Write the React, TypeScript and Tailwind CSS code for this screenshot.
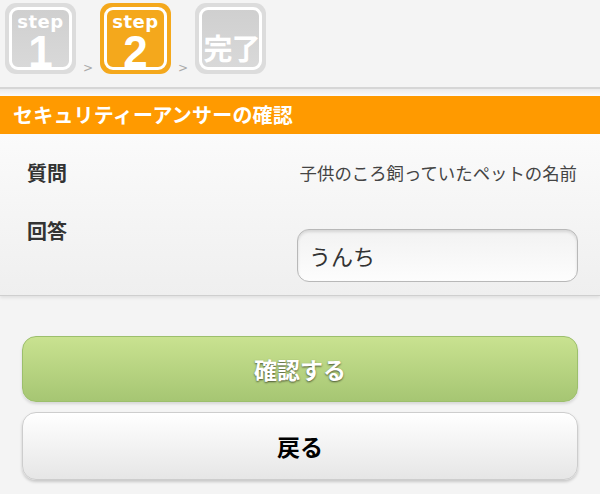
const jp = { fontFamily: '"Noto Sans CJK JP", "Noto Sans", sans-serif' };

// step badge drawn as a small graphic, like the original image
const StepBadge = ({ id, active, label, num }: { id: string; active?: boolean; label?: string; num: string }) => {
  const outer = active ? '#f4a81c' : '#dcdcdc';
  return (
    <svg width="71" height="71" viewBox="0 0 71 71" overflow="visible" className="block shrink-0 overflow-visible">
      <defs>
        <linearGradient id={`g-${id}`} x1="0" y1="0" x2="0" y2="1">
          <stop offset="0" stopColor={active ? '#f4a81c' : '#cfcfcf'} />
          <stop offset="1" stopColor={active ? '#f4a81c' : '#d9d9d9'} />
        </linearGradient>
      </defs>
      <rect x="0" y="0" width="71" height="71" rx="11" fill={outer} />
      <rect x="5.5" y="5.5" width="60" height="60" rx="7.5" fill={`url(#g-${id})`} stroke="#fff" strokeWidth="3" />
      {label ? (
        <>
          <text
            x="35.5"
            y="25"
            textAnchor="middle"
            fill="#fff"
            fontSize="18"
            fontWeight="bold"
            fontFamily='"DejaVu Sans", sans-serif'
            letterSpacing="0.5"
          >
            {label}
          </text>
          <text
            x="35.5"
            y="64"
            textAnchor="middle"
            fill="#fff"
            fontSize="44"
            fontWeight="bold"
            fontFamily='"Liberation Sans", Arial, sans-serif'
          >
            {num}
          </text>
        </>
      ) : (
        <text
          x="36.5"
          y="57"
          textAnchor="middle"
          fill="#fff"
          fontSize="29"
          fontWeight="bold"
          fontFamily='"Noto Sans CJK JP", sans-serif'
          letterSpacing="-1"
        >
          {num}
        </text>
      )}
    </svg>
  );
};

const Arrow = () => (
  <span
    className="self-end w-[24px] text-center text-[12px] leading-none text-[#aaaaaa]"
    style={{ fontFamily: '"DejaVu Sans", sans-serif' }}
  >
    &gt;
  </span>
);

export default function App() {
  return (
    <div className="w-[600px] h-[494px] overflow-hidden bg-[#f4f4f4]" style={jp}>
      {/* Steps */}
      <div className="h-[87px] pt-[3px] pl-[5px]">
        <div className="flex items-start">
          <StepBadge id="s1" label="step" num="1" />
          <Arrow />
          <StepBadge id="s2" active label="step" num="2" />
          <Arrow />
          <StepBadge id="s3" num="完了" />
        </div>
      </div>
      <div className="h-[2px] bg-[#d6d6d6]" />
      <div className="h-[7px] bg-gradient-to-b from-[#ebebeb] to-[#fbfbfb]" />

      {/* Title bar */}
      <div className="h-[38px] bg-[#ff9a00] flex items-center pl-[13px]">
        <h1 className="text-white font-bold text-[20px] leading-none tracking-[0.2px]">セキュリティーアンサーの確認</h1>
      </div>

      {/* Form panel */}
      <div className="h-[162px] bg-gradient-to-b from-[#fbfbfb] to-[#efefef] border-b border-[#cfcfcf] shadow-[0_2px_3px_rgba(0,0,0,0.08)] pt-[27px] pl-[27px] pr-[22px]">
        <div className="h-[24px] flex items-center justify-between">
          <span className="text-[20px] font-bold text-[#333]">質問</span>
          <span className="text-[17.4px] text-[#444] pr-[1px]">子供のころ飼っていたペットの名前</span>
        </div>
        <div className="mt-[34px] flex items-start justify-between">
          <span className="h-[24px] leading-[24px] text-[20px] font-bold text-[#333]">回答</span>
          <div className="mt-[10px] w-[281px] h-[53px] rounded-[12px] border border-[#b8b8b8] bg-gradient-to-b from-[#f2f2f2] to-[#fdfdfd] shadow-[inset_0_2px_3px_rgba(0,0,0,0.12)] flex items-center pl-[11px]">
            <span className="text-[22px] text-[#333]">うんち</span>
          </div>
        </div>
      </div>

      {/* Buttons */}
      <div className="px-[22px] pt-[40px] flex flex-col gap-[10px]">
        <button className="h-[66px] w-full rounded-[14px] border border-[#9cbf6c] bg-gradient-to-b from-[#c9e290] to-[#a6c673] shadow-[0_2px_3px_rgba(0,0,0,0.12)] flex items-center justify-center">
          <span className="text-white font-bold text-[23px] [text-shadow:0_1px_2px_rgba(0,0,0,0.6)]">確認する</span>
        </button>
        <button className="h-[68px] w-full rounded-[14px] border border-[#cdcdcd] bg-gradient-to-b from-[#ffffff] to-[#e6e6e6] shadow-[0_2px_3px_rgba(0,0,0,0.18)] flex items-center justify-center">
          <span className="text-black font-bold text-[23px]">戻る</span>
        </button>
      </div>
    </div>
  );
}
